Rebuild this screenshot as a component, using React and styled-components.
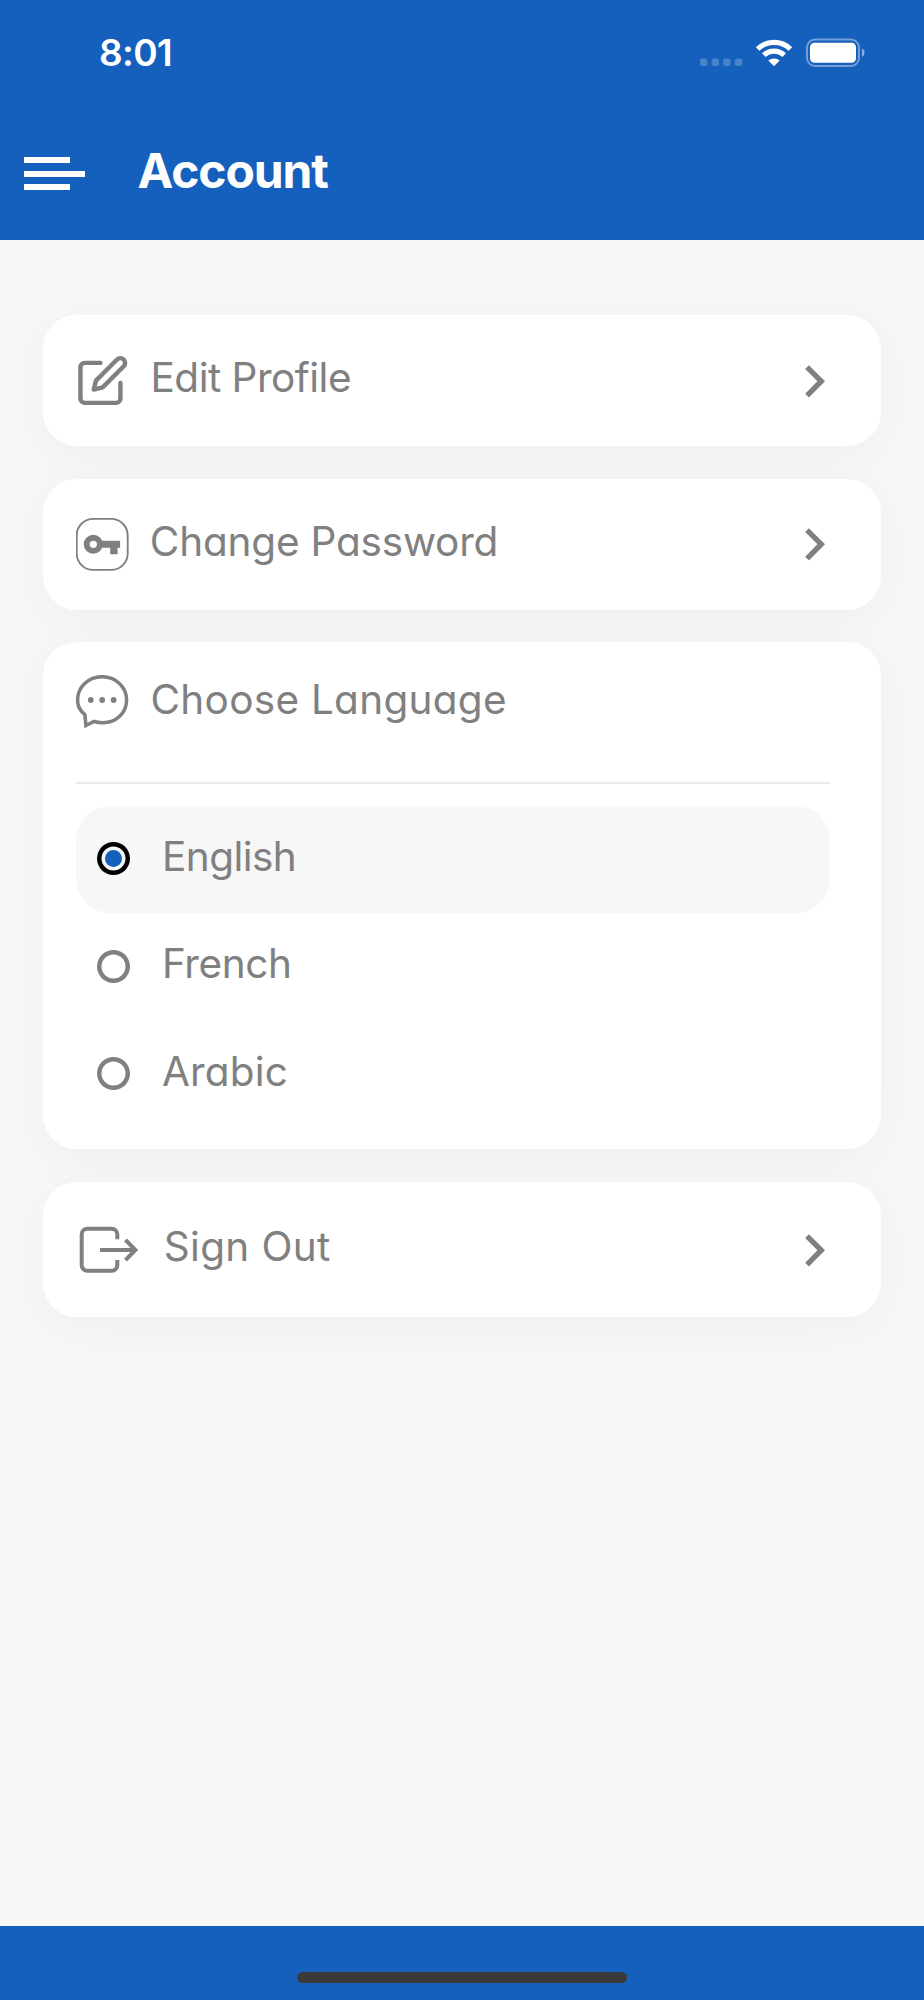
import React, { useState } from 'react';
import styled, { createGlobalStyle } from 'styled-components';
import { FiEdit } from 'react-icons/fi';
import { MdChevronRight } from 'react-icons/md';

const GlobalStyle = createGlobalStyle`
    * {
        box-sizing: border-box;
    }

    body {
        margin: 0;
        background-color: #f7f7f7;
        font-family: Inter, "Open Sans", sans-serif;
    }
`;

const Screen = styled.div`
    width: 924px;
    height: 2000px;
    display: flex;
    flex-direction: column;
    background-color: #f7f7f7;
    overflow: hidden;
`;

const Header = styled.header`
    height: 239.5px;
    flex: none;
    background-color: #1660bd;
    color: #fff;
`;

const StatusBar = styled.div`
    height: 105px;
    padding: 0 59px 0 99px;
    display: flex;
    align-items: center;
    justify-content: space-between;
`;

const Time = styled.span`
    font-size: 37px;
    line-height: 44px;
    font-weight: 600;
    letter-spacing: -0.6px;
`;

const StatusIcons = styled.svg`
    display: block;
    width: 166px;
    height: 30px;
`;

const TitleBar = styled.div`
    height: 134px;
    padding: 0 0 0 24px;
    display: flex;
    align-items: center;
`;

const MenuButton = styled.button`
    width: 60.5px;
    height: 33px;
    margin: 3px 53px 0 0;
    padding: 0;
    border: none;
    background-color: transparent;
    display: flex;
    flex-direction: column;
    justify-content: space-between;
`;

const MenuLine = styled.span`
    width: ${(props) => (props.$long ? '60.5px' : '46px')};
    height: 6px;
    background-color: #fff;
`;

const Title = styled.h1`
    margin: 0 0 2px;
    font-size: 48px;
    line-height: 58px;
    font-weight: 700;
    letter-spacing: -1.1px;
    font-feature-settings: "cv11";
`;

const Content = styled.main`
    flex: 1;
    padding: 75.5px 43px 0;
    display: flex;
    flex-direction: column;
    gap: 32.7px;
`;

const Card = styled.section`
    background-color: #fff;
    border-radius: 34px;
    box-shadow: 0 10px 50px rgba(0, 0, 0, 0.037);
`;

const Row = styled(Card)`
    height: ${(props) => props.$height || 131}px;
    padding: 1px 34.5px 0 33px;
    display: flex;
    align-items: center;
`;

const IconBox = styled.span`
    width: ${(props) => props.$width || 53}px;
    margin-left: ${(props) => props.$offset || 0}px;
    margin-right: ${(props) => props.$gap || 22}px;
    display: flex;
    flex: none;
    color: #808080;

    svg {
        display: block;
        flex: none;
    }
`;

const Label = styled.span`
    flex: 1;
    margin-bottom: 6px;
    font-size: 40.5px;
    line-height: 50px;
    font-weight: 400;
    letter-spacing: ${(props) => props.$spacing || 0}px;
    font-feature-settings: "cv11";
    white-space: nowrap;
    color: #808080;
`;

const Chevron = styled(MdChevronRight)`
    width: 64.6px;
    height: 64.6px;
    color: #808080;
`;

const LanguageCard = styled(Card)`
    height: 506.7px;
    padding: 0 51px 0 33px;
`;

const LanguageHeader = styled.div`
    height: 141.5px;
    padding-top: 32.5px;
    display: flex;
    align-items: flex-start;
    border-bottom: 2px solid #ebebeb;
`;

const Options = styled.div`
    padding-top: 21.7px;
`;

const Option = styled.label`
    height: 107.3px;
    padding-left: 21px;
    display: flex;
    align-items: center;
    border-radius: 34px;
    background-color: ${(props) => (props.$active ? '#f7f7f7' : 'transparent')};

    ${Label} {
        margin-bottom: 4.5px;
    }

    input {
        appearance: none;
        width: 33px;
        height: 33px;
        margin: 0 32px 1px 0;
        box-shadow: inset 0 0 0 4.5px ${(props) => (props.$active ? '#000' : '#808080')};
        border-radius: 50%;
        display: grid;
        place-items: center;
    }

    input:checked::before {
        content: "";
        width: 17px;
        height: 17px;
        border-radius: 50%;
        background-color: #1660bd;
    }
`;

const Footer = styled.footer`
    height: 74px;
    padding-top: 45.7px;
    flex: none;
    display: flex;
    justify-content: center;
    align-items: flex-start;
    background-color: #1660bd;
`;

const HomeIndicator = styled.div`
    width: 330px;
    height: 11px;
    border-radius: 6px;
    background-color: #3a3a3a;
`;

const KeyIcon = () => (
    <svg width="53" height="53" viewBox="0 0 53 53" fill="none">
        <rect x="0.7" y="0.9" width="51" height="51" rx="16.5" stroke="currentColor" strokeWidth="1.9" />
        <circle cx="17.3" cy="26.3" r="6.6" stroke="currentColor" strokeWidth="5.9" />
        <path d="M25 22.7h19.1v7.1h-2.5v6.5h-7.4v-6.5H25z" fill="currentColor" />
    </svg>
);

const ChatIcon = () => (
    <svg width="53" height="53" viewBox="0 0 53 53" fill="none">
        <path
            d="M8.9 39.6C4.2 36 1.6 31 1.6 25 1.6 12 12.5 1.7 26.1 1.7S50.6 12 50.6 25 40 47.7 27 47.7c-3.5 0-6.3-.3-9-1.2L9.9 50.5z"
            stroke="currentColor"
            strokeWidth="3.5"
        />
        <circle cx="14.8" cy="25" r="2.9" fill="currentColor" />
        <circle cx="26.2" cy="25" r="2.9" fill="currentColor" />
        <circle cx="37.6" cy="25" r="2.9" fill="currentColor" />
    </svg>
);

const SignOutIcon = () => (
    <svg width="62" height="50" viewBox="0 0 62 50" fill="none" stroke="currentColor" strokeWidth="4">
        <path d="M39.3 14.3V9.2a5.5 5.5 0 0 0-5.5-5.5H9.2a5.5 5.5 0 0 0-5.5 5.5v31a5.5 5.5 0 0 0 5.5 5.5h24.6a5.5 5.5 0 0 0 5.5-5.5V35" />
        <path d="M22 25h35M47.5 14.8 57.4 25l-9.9 10.2" />
    </svg>
);

const languages = [
    { name: 'English', spacing: -0.55 },
    { name: 'French', spacing: -0.4 },
    { name: 'Arabic', spacing: 0.15 },
];

const App = () => {
    const [language, setLanguage] = useState('English');

    return (
        <Screen>
            <GlobalStyle />
            <Header>
                <StatusBar>
                    <Time>8:01</Time>
                    <StatusIcons viewBox="0 0 166 30" fill="#fff">
                        <g opacity="0.22">
                            <rect x="1" y="20.5" width="7.4" height="7.6" rx="2.5" />
                            <rect x="12.6" y="20.5" width="7.4" height="7.6" rx="2.5" />
                            <rect x="24.2" y="20.5" width="7.4" height="7.6" rx="2.5" />
                            <rect x="35.8" y="20.5" width="7.4" height="7.6" rx="2.5" />
                        </g>
                        <g fill="none" stroke="#fff" strokeWidth="5.2">
                            <path d="M58.6 11a23.5 23.5 0 0 1 32.8 0" />
                            <path d="M64.8 17.2a14.7 14.7 0 0 1 20.4 0" />
                        </g>
                        <path d="M75 28.2 69.3 22.6a8.5 8.5 0 0 1 11.4 0z" />
                        <rect x="108" y="1.5" width="52" height="26.5" rx="8" fill="none" stroke="#fff" strokeOpacity="0.4" strokeWidth="2" />
                        <rect x="111" y="4.8" width="46" height="20" rx="4.5" />
                        <path d="M163 10.5a5 5 0 0 1 0 8.6z" opacity="0.5" />
                    </StatusIcons>
                </StatusBar>
                <TitleBar>
                    <MenuButton aria-label="Menu">
                        <MenuLine />
                        <MenuLine $long />
                        <MenuLine />
                    </MenuButton>
                    <Title>Account</Title>
                </TitleBar>
            </Header>
            <Content>
                <Row>
                    <IconBox $offset={-0.5} $gap={22}>
                        <FiEdit size={53.3} />
                    </IconBox>
                    <Label $spacing={-0.5}>Edit Profile</Label>
                    <Chevron />
                </Row>
                <Row>
                    <IconBox $gap={20.8}>
                        <KeyIcon />
                    </IconBox>
                    <Label $spacing={-0.2}>Change Password</Label>
                    <Chevron />
                </Row>
                <LanguageCard>
                    <LanguageHeader>
                        <IconBox $gap={21.5}>
                            <ChatIcon />
                        </IconBox>
                        <Label $spacing={0.28}>Choose Language</Label>
                    </LanguageHeader>
                    <Options>
                        {languages.map(({ name, spacing }) => (
                            <Option key={name} $active={language === name}>
                                <input
                                    type="radio"
                                    name="language"
                                    checked={language === name}
                                    onChange={() => setLanguage(name)}
                                />
                                <Label $spacing={spacing}>{name}</Label>
                            </Option>
                        ))}
                    </Options>
                </LanguageCard>
                <Row $height={135.4}>
                    <IconBox $width={62} $offset={2} $gap={23.7}>
                        <SignOutIcon />
                    </IconBox>
                    <Label $spacing={0.35}>Sign Out</Label>
                    <Chevron />
                </Row>
            </Content>
            <Footer>
                <HomeIndicator />
            </Footer>
        </Screen>
    );
};

export default App;
